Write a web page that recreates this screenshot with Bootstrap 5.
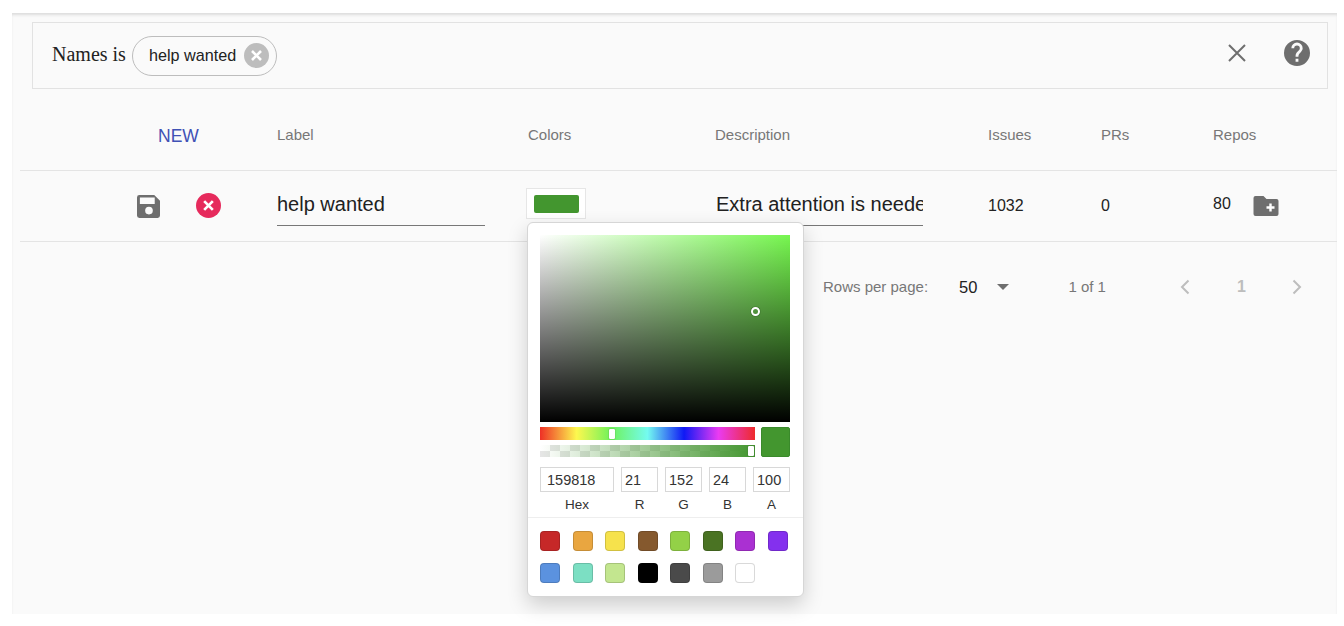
<!DOCTYPE html>
<html lang="en">
<head>
  <meta charset="UTF-8">
  <meta name="viewport" content="width=device-width, initial-scale=1.0">
  <title>Labels</title>
  <link href="https://cdn.jsdelivr.net/npm/bootstrap@5.3.0/dist/css/bootstrap.min.css" rel="stylesheet">
  <style>
    html, body { height: 100%; }
    body {
      background: #fff;
      font-family: "Liberation Sans", Arial, sans-serif;
      color: #222;
      padding: 13px 7px 12px 12px;
      overflow: hidden;
    }
    .sheet {
      height: 601px;
      background: #fafafa;
      box-shadow: inset 0 3px 3px -1px #dcdcdc;
      padding-top: 9px;
      position: relative;
    }
    .filter-box {
      height: 67px;
      margin: 0 9px 0 20px;
      border: 1px solid #e2e2e2;
      padding: 0 17px 0 19px;
    }
    .filter-name { font-family: "Liberation Serif", serif; font-size: 20px; color: #222; margin-top: -3px; }
    .chip {
      height: 40px;
      margin-left: 6px;
      padding: 0 7px 0 16px;
      border: 1px solid #bdbdbd;
      border-radius: 20px;
      font-size: 16.2px;
      color: #222;
    }
    .clear-icon { margin-top: -6px; }
    .help-icon { margin-left: 37px; margin-top: -6px; }
    .tbl-row {
      display: grid;
      grid-template-columns: 257px 250px 188px 273px 113px 112px 1fr;
      margin-left: 8px;
      border-bottom: 1px solid #e4e4e4;
    }
    .head-row { height: 82px; padding-top: 12px; font-size: 15px; color: #777; }
    .body-row { height: 71px; font-size: 16px; color: #222; }
    .colors-head { padding-left: 1px; }
    .btn-new { font-size: 17.5px; color: #3f51b5; margin-left: 138px; margin-top: 1px; }
    .save-icon { margin-left: 117px; }
    .cancel-icon { margin-left: 36px; margin-top: -1px; }
    .text-cell {
      width: 208px;
      height: 40px;
      margin-top: 15px;
      border-bottom: 1px solid #777;
      font-size: 20px;
      line-height: 37px;
      color: #212121;
      white-space: nowrap;
      overflow: hidden;
    }
    .desc-cell { padding-left: 1px; }
    .swatch-btn {
      width: 60px;
      height: 31px;
      margin: 17px 0 0 -1px;
      padding: 6px 6px 5px 7px;
      background: #fff;
      border: 1px solid #e6e6e6;
    }
    .swatch-btn span { display: block; height: 100%; background: #43962f; border-radius: 2px; }
    .repo-count { margin-top: -4px; }
    .folder-icon { margin-left: 22px; }
    .pager { height: 90px; font-size: 15px; color: #777; padding-left: 811px; }
    .pager-size { font-size: 16.5px; color: #222; margin-left: 31px; }
    .pager-caret { width: 0; height: 0; margin-left: 20px; border-left: 6.5px solid transparent; border-right: 6.5px solid transparent; border-top: 6px solid #6e6e6e; }
    .pager-range { margin-left: 59px; }
    .pager-btns { margin-left: 73px; color: #bdbdbd; font-size: 16px; font-weight: 700; gap: 46px; }
    .pager-page { margin-left: 1px; }
    .picker {
      position: absolute;
      left: 515px;
      top: 209px;
      width: 277px;
      height: 375px;
      padding: 12px 13px 0 12px;
      background: #fff;
      border: 1px solid #d6d6d6;
      border-radius: 6px;
      box-shadow: 0 8px 20px rgba(0,0,0,.18);
    }
    .sat-area {
      height: 187px;
      position: relative;
      background: linear-gradient(to top, #000, rgba(0,0,0,0)), linear-gradient(to right, #fff, #76f64f);
    }
    .sat-dot { position: absolute; left: 211px; top: 72px; width: 9px; height: 9px; border: 2px solid #fff; border-radius: 50%; box-shadow: 0 0 1px #000; }
    .bars { margin-top: 5px; gap: 6px; height: 30px; }
    .bars-left { width: 215px; }
    .hue-bar {
      height: 13px;
      position: relative;
      background: linear-gradient(to right, #ee3026, #fdf84f 17%, #6ff25a 33%, #74fbf0 50%, #0f19f5 67%, #ea3bf2 83%, #ee2b2b);
    }
    .alpha-bar {
      height: 12px;
      margin-top: 5px;
      position: relative;
      background:
        linear-gradient(to right, rgba(67,150,47,0), #43962f),
        repeating-conic-gradient(#e6e6e6 0 25%, #fff 0 50%) 0 0 / 20px 12px;
    }
    .slider-knob { position: absolute; top: 2px; width: 6px; height: 10px; background: #fff; border-radius: 1px; box-shadow: 0 0 1px #333; }
    .hue-knob { left: 69px; }
    .alpha-knob { left: 208px; top: 1px; }
    .big-swatch { width: 29px; height: 30px; background: #43962f; border: 1px solid #3a8a2b; border-radius: 2px; }
    .rgba-row { margin-top: 10px; justify-content: space-between; }
    .rgba-col { width: 37px; text-align: center; font-size: 13.5px; color: #333; }
    .rgba-col.hex-col { width: 74px; }
    .rgba-val {
      height: 25px;
      border: 1px solid #d8d8d8;
      text-align: left;
      padding-left: 3px;
      font-size: 14.5px;
      line-height: 25px;
      color: #333;
    }
    .hex-col .rgba-val { padding-left: 6px; }
    .rgba-name { margin-top: 3px; line-height: 20px; }
    .picker-rule { margin: 2px -13px 0 -12px; border-top: 1px solid #eee; }
    .presets { display: grid; grid-template-columns: repeat(8, 20px); column-gap: 12.5px; row-gap: 12px; margin-top: 13px; }
    .preset { height: 20px; border-radius: 4px; border: 1px solid rgba(0,0,0,.15); }
    .p-red { background: #c62828; }
    .p-orange { background: #e9a640; }
    .p-yellow { background: #f6e24c; }
    .p-brown { background: #85592e; }
    .p-lime { background: #93d147; }
    .p-forest { background: #4a7323; }
    .p-purple { background: #aa30d2; }
    .p-violet { background: #8430ee; }
    .p-blue { background: #5b92df; }
    .p-teal { background: #7cdfc3; }
    .p-pale { background: #c3e68f; }
    .p-black { background: #000; }
    .p-dark { background: #4a4a4a; }
    .p-gray { background: #9b9b9b; }
    .p-white { background: #fff; }
  </style>
</head>
<body>
  <div class="sheet">
    <div class="filter-box d-flex align-items-center">
      <span class="filter-name">Names is</span>
      <span class="chip d-inline-flex align-items-center gap-2">help wanted
        <svg width="25" height="25" viewBox="0 0 25 25"><circle cx="12.5" cy="12.5" r="12.5" fill="#bdbdbd"/><path d="M8 8l9 9M17 8l-9 9" stroke="#fff" stroke-width="2.6" fill="none"/></svg>
      </span>
      <svg class="clear-icon ms-auto" width="20" height="20" viewBox="0 0 20 20"><path d="M2 2l16 16M18 2L2 18" stroke="#6e6e6e" stroke-width="2" fill="none"/></svg>
      <svg class="help-icon" width="26" height="26" viewBox="0 0 24 24"><path fill="#6e6e6e" d="M12 0a12 12 0 1 0 0 24 12 12 0 0 0 0-24zm1.3 20h-2.600v-2.600h2.600V20zm2.600-9.200l-1.100 1.200c-.9.900-1.500 1.600-1.500 3.400h-2.600v-.7c0-1.400.6-2.700 1.500-3.600l1.600-1.600c.5-.5.800-1.100.8-1.900a2.600 2.600 0 0 0-5.200 0H6.800a5.200 5.200 0 0 1 10.400 0c0 1.100-.5 2.200-1.300 3z"/></svg>
    </div>

    <div class="tbl-row head-row align-items-center">
      <div class="btn-new">NEW</div>
      <div>Label</div>
      <div class="colors-head">Colors</div>
      <div>Description</div>
      <div>Issues</div>
      <div>PRs</div>
      <div>Repos</div>
    </div>

    <div class="tbl-row body-row">
      <div class="d-flex align-items-center">
        <svg class="save-icon" width="23" height="23" viewBox="0 0 24 24"><path fill="#6e6e6e" d="M2.500 0h15.500L24 6v15.500a2.500 2.500 0 0 1-2.500 2.500h-19A2.500 2.500 0 0 1 0 21.500v-19A2.500 2.500 0 0 1 2.500 0zM3 2.500v7h15.500v-7H3zM12.500 12.300a4 4 0 1 0 0 8 4 4 0 0 0 0-8z" fill-rule="evenodd"/></svg>
        <svg class="cancel-icon" width="25" height="25" viewBox="0 0 26 26"><circle cx="13" cy="13" r="13" fill="#e62a5c"/><path d="M8.500 8.500l9 9M17.500 8.500l-9 9" stroke="#fff" stroke-width="2.800" fill="none"/></svg>
      </div>
      <div><div class="text-cell">help wanted</div></div>
      <div><div class="swatch-btn"><span></span></div></div>
      <div><div class="text-cell desc-cell">Extra attention is needed</div></div>
      <div class="d-flex align-items-center">1032</div>
      <div class="d-flex align-items-center">0</div>
      <div class="d-flex align-items-center">
        <span class="repo-count">80</span>
        <svg class="folder-icon" width="26" height="20" viewBox="0 0 25 20"><path fill="#6e6e6e" d="M2 0h8l3 3h10a2 2 0 0 1 2 2v13a2 2 0 0 1-2 2H2a2 2 0 0 1-2-2V2a2 2 0 0 1 2-2z"/><path d="M13 11.500h8M17 7.500v8" stroke="#fff" stroke-width="2.400" fill="none"/></svg>
      </div>
    </div>

    <div class="pager d-flex align-items-center">
      <span>Rows per page:</span>
      <span class="pager-size">50</span>
      <span class="pager-caret"></span>
      <span class="pager-range">1 of 1</span>
      <div class="pager-btns d-flex align-items-center">
        <svg width="11" height="16" viewBox="0 0 11 16"><path d="M9.500 1.500L3 8l6.500 6.500" stroke="#bdbdbd" stroke-width="2" fill="none"/></svg>
        <span class="pager-page">1</span>
        <svg width="11" height="16" viewBox="0 0 11 16"><path d="M1.500 1.500L8 8l-6.500 6.500" stroke="#bdbdbd" stroke-width="2" fill="none"/></svg>
      </div>
    </div>

    <div class="picker">
      <div class="sat-area"><span class="sat-dot"></span></div>
      <div class="bars d-flex">
        <div class="bars-left">
          <div class="hue-bar"><span class="slider-knob hue-knob"></span></div>
          <div class="alpha-bar"><span class="slider-knob alpha-knob"></span></div>
        </div>
        <div class="big-swatch"></div>
      </div>
      <div class="rgba-row d-flex">
        <div class="rgba-col hex-col"><div class="rgba-val">159818</div><div class="rgba-name">Hex</div></div>
        <div class="rgba-col"><div class="rgba-val">21</div><div class="rgba-name">R</div></div>
        <div class="rgba-col"><div class="rgba-val">152</div><div class="rgba-name">G</div></div>
        <div class="rgba-col"><div class="rgba-val">24</div><div class="rgba-name">B</div></div>
        <div class="rgba-col"><div class="rgba-val">100</div><div class="rgba-name">A</div></div>
      </div>
      <div class="picker-rule"></div>
      <div class="presets">
        <div class="preset p-red"></div>
        <div class="preset p-orange"></div>
        <div class="preset p-yellow"></div>
        <div class="preset p-brown"></div>
        <div class="preset p-lime"></div>
        <div class="preset p-forest"></div>
        <div class="preset p-purple"></div>
        <div class="preset p-violet"></div>
        <div class="preset p-blue"></div>
        <div class="preset p-teal"></div>
        <div class="preset p-pale"></div>
        <div class="preset p-black"></div>
        <div class="preset p-dark"></div>
        <div class="preset p-gray"></div>
        <div class="preset p-white"></div>
      </div>
    </div>
  </div>

  <script src="https://cdn.jsdelivr.net/npm/bootstrap@5.3.0/dist/js/bootstrap.bundle.min.js"></script>
</body>
</html>
